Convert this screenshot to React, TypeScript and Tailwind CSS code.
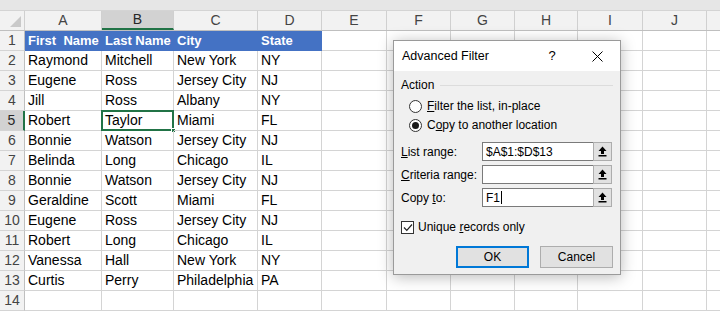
import React from "react";

const cols = [
  { l: "A", w: 77 },
  { l: "B", w: 72 },
  { l: "C", w: 84 },
  { l: "D", w: 64 },
  { l: "E", w: 65 },
  { l: "F", w: 64 },
  { l: "G", w: 64 },
  { l: "H", w: 63 },
  { l: "I", w: 65 },
  { l: "J", w: 64 },
  { l: "", w: 40 },
];

const data: string[][] = [
  ["First  Name", "Last Name", "City", "State"],
  ["Raymond", "Mitchell", "New York", "NY"],
  ["Eugene", "Ross", "Jersey City", "NJ"],
  ["Jill", "Ross", "Albany", "NY"],
  ["Robert", "Taylor", "Miami", "FL"],
  ["Bonnie", "Watson", "Jersey City", "NJ"],
  ["Belinda", "Long", "Chicago", "IL"],
  ["Bonnie", "Watson", "Jersey City", "NJ"],
  ["Geraldine", "Scott", "Miami", "FL"],
  ["Eugene", "Ross", "Jersey City", "NJ"],
  ["Robert", "Long", "Chicago", "IL"],
  ["Vanessa", "Hall", "New York", "NY"],
  ["Curtis", "Perry", "Philadelphia", "PA"],
  ["", "", "", ""],
];

function RefButton() {
  return (
    <div className="w-[19px] h-full bg-[#e1e1e1] border border-[#adadad] flex items-center justify-center">
      <svg width="9" height="11" viewBox="0 0 9 11">
        <path d="M4.5 0.5 L8.5 5 L6 5 L6 8 L3 8 L3 5 L0.5 5 Z" fill="#000" />
        <rect x="0.5" y="9" width="8" height="1.5" fill="#000" />
      </svg>
    </div>
  );
}

function RangeRow({ label, value, cursor }: { label: React.ReactNode; value: string; cursor?: boolean }) {
  return (
    <div className="flex items-center h-[19px]">
      <div className="w-[81px] shrink-0">{label}</div>
      <div className="w-[111px] h-full bg-white border border-[#7a7a7a] border-r-0 flex items-center pl-[3px] text-[12px]">
        {value}
        {cursor && <span className="inline-block w-px h-[13px] bg-black ml-[1px]" />}
      </div>
      <RefButton />
    </div>
  );
}

export default function App() {
  return (
    <div
      className="relative w-[720px] h-[312px] overflow-hidden bg-white"
      style={{ fontFamily: '"Liberation Sans", Arial, sans-serif' }}
    >
      <div className="h-[11px] bg-[#e6e6e6] border-b border-[#d4d4d4]" />
      {/* column header */}
      <div className="flex h-[20px] bg-[#f2f2f2] border-b border-[#bfbfbf]">
        <div className="w-[25px] shrink-0 border-r border-[#d0d0d0] relative">
          <svg className="absolute right-[3px] bottom-[3px]" width="11" height="11" viewBox="0 0 11 11">
            <path d="M11 0 L11 11 L0 11 Z" fill="#c9c9c9" />
          </svg>
        </div>
        {cols.map((c) => (
          <div
            key={c.l + c.w}
            style={{ width: c.w }}
            className={`shrink-0 flex items-center justify-center text-[14px] border-r border-[#d0d0d0] ${
              c.l === "B" ? "bg-[#d2d2d2] border-b-2 border-b-[#217346] text-[#262626]" : "text-[#444]"
            }`}
          >
            {c.l}
          </div>
        ))}
      </div>
      {data.map((row, ri) => {
        const rn = ri + 1;
        return (
          <div key={ri} className="flex h-[20px]">
            <div
              className={`w-[25px] shrink-0 flex items-center justify-center text-[14px] border-b border-[#d4d4d4] ${
                rn === 5
                  ? "bg-[#d2d2d2] border-r-2 border-r-[#217346] text-[#262626]"
                  : "bg-[#f2f2f2] border-r border-r-[#bfbfbf] text-[#444]"
              }`}
            >
              {rn}
            </div>
            {cols.map((c, ci) => {
              const txt = ci < 4 ? row[ci] : "";
              const header = rn === 1 && ci < 4;
              const sel = rn === 5 && ci === 1;
              return (
                <div
                  key={ci}
                  style={{ width: c.w }}
                  className={`shrink-0 relative flex items-center pl-[3px] whitespace-pre overflow-visible ${
                    header
                      ? "bg-[#4472c4] text-white font-bold text-[13px] border-r border-b border-[#4472c4]"
                      : "text-black text-[14px] border-r border-b border-[#d4d4d4]"
                  }`}
                >
                  {txt}
                  {sel && (
                    <>
                      <div className="absolute left-[-1px] top-[-1px] right-[-1px] bottom-[-1px] border-2 border-[#217346]" />
                      <div className="absolute right-[-3px] bottom-[-3px] w-[5px] h-[5px] bg-[#217346] border border-white" />
                    </>
                  )}
                </div>
              );
            })}
          </div>
        );
      })}

      {/* dialog */}
      <div className="absolute left-[393px] top-[40px] w-[228px] h-[235px] bg-[#f0f0f0] border border-[#9a9a9a] shadow-[0_2px_14px_rgba(0,0,0,0.28)] flex flex-col text-[12px] text-black">
        <div className="h-[30px] bg-white flex items-center shrink-0">
          <span className="pl-[8px] text-[12.5px]">Advanced Filter</span>
          <div className="flex-1" />
          <span className="w-[20px] text-center text-[13px]">?</span>
          <div className="w-[25px]" />
          <div className="w-[20px] flex justify-center mr-[13px]">
            <svg width="11" height="11" viewBox="0 0 11 11">
              <path d="M0.5 0.5 L10.5 10.5 M10.5 0.5 L0.5 10.5" stroke="#000" strokeWidth="1" />
            </svg>
          </div>
        </div>
        <div className="px-[7px] flex flex-col">
          <div className="mt-[6px] h-[16px] flex items-center">
            <span>Action</span>
            <div className="flex-1 h-px bg-[#dcdcdc] ml-[6px]" />
          </div>
          <div className="mt-[5px] h-[16px] flex items-center ml-[8px]">
            <div className="w-[13px] h-[13px] rounded-full border border-[#333] bg-white" />
            <span className="ml-[5px]">
              <u>F</u>ilter the list, in-place
            </span>
          </div>
          <div className="mt-[3px] h-[16px] flex items-center ml-[8px]">
            <div className="w-[13px] h-[13px] rounded-full border border-[#333] bg-white flex items-center justify-center">
              <div className="w-[7px] h-[7px] rounded-full bg-[#1a1a1a]" />
            </div>
            <span className="ml-[5px]">
              C<u>o</u>py to another location
            </span>
          </div>
          <div className="mt-[9px] flex flex-col gap-[4px]">
            <RangeRow label={<><u>L</u>ist range:</>} value="$A$1:$D$13" />
            <RangeRow label={<><u>C</u>riteria range:</>} value="" />
            <RangeRow label={<>Copy <u>t</u>o:</>} value="F1" cursor />
          </div>
          <div className="mt-[12px] h-[16px] flex items-center">
            <div className="w-[13px] h-[13px] border border-[#333] bg-white flex items-center justify-center">
              <svg width="10" height="9" viewBox="0 0 10 9">
                <path d="M1 4.5 L3.8 7.3 L9 1.5" stroke="#222" strokeWidth="1.2" fill="none" />
              </svg>
            </div>
            <span className="ml-[4px]">
              Unique <u>r</u>ecords only
            </span>
          </div>
          <div className="mt-[11px] flex justify-end gap-[11px]">
            <div className="w-[73px] h-[22px] border-2 border-[#0078d7] bg-[#e1e1e1] flex items-center justify-center">
              OK
            </div>
            <div className="w-[73px] h-[22px] border border-[#adadad] bg-[#e1e1e1] flex items-center justify-center">
              Cancel
            </div>
          </div>
        </div>
      </div>
    </div>
  );
}
